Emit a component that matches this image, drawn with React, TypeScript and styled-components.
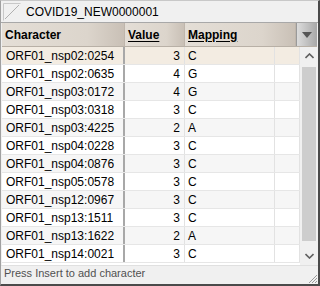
import React from "react";
import styled, { createGlobalStyle } from "styled-components";

const GlobalStyle = createGlobalStyle`
  body {
    margin: 0;
    font-family: "Liberation Sans", Arial, sans-serif;
    font-size: 12px;
    color: #000;
    background: #f0f0f0;
  }
`;

interface Row {
  name: string;
  value: number;
  mapping: string;
}

const rows: Row[] = [
  { name: "ORF01_nsp02:0254", value: 3, mapping: "C" },
  { name: "ORF01_nsp02:0635", value: 4, mapping: "G" },
  { name: "ORF01_nsp03:0172", value: 4, mapping: "G" },
  { name: "ORF01_nsp03:0318", value: 3, mapping: "C" },
  { name: "ORF01_nsp03:4225", value: 2, mapping: "A" },
  { name: "ORF01_nsp04:0228", value: 3, mapping: "C" },
  { name: "ORF01_nsp04:0876", value: 3, mapping: "C" },
  { name: "ORF01_nsp05:0578", value: 3, mapping: "C" },
  { name: "ORF01_nsp12:0967", value: 3, mapping: "C" },
  { name: "ORF01_nsp13:1511", value: 3, mapping: "C" },
  { name: "ORF01_nsp13:1622", value: 2, mapping: "A" },
  { name: "ORF01_nsp14:0021", value: 3, mapping: "C" },
];

const App = () => {
  return (
    <>
      <GlobalStyle />
      <Frame>
        <TabBar>
          <TabIcon width="18" height="18" viewBox="0 0 18 18">
            <path d="M0.5 17.5 L0.5 0.5 L17.5 0.5" fill="none" stroke="#c8c8c8" />
            <path d="M2 16 L16 2" stroke="#b0b0b0" strokeWidth="1" />
          </TabIcon>
          <TabLabel>COVID19_NEW0000001</TabLabel>
        </TabBar>
        <HeaderRow>
          <HeaderCell>Character</HeaderCell>
          <HeaderCell underline>Value</HeaderCell>
          <HeaderCell underline>Mapping</HeaderCell>
          <DropButton>
            <svg width="10" height="6" viewBox="0 0 10 6">
              <path d="M0 0 L10 0 L5 6 Z" fill="#555" />
            </svg>
          </DropButton>
        </HeaderRow>
        <Body>
          <Rows>
            {rows.map((row, idx) => (
              <DataRow key={row.name} selected={idx === 0} alt={idx % 2 === 0}>
                <NameCell>{row.name}</NameCell>
                <ValueCell>{row.value}</ValueCell>
                <MapCell>{row.mapping}</MapCell>
                <MapCell />
              </DataRow>
            ))}
          </Rows>
          <ScrollBar>
            <Arrow>
              <svg width="9" height="6" viewBox="0 0 9 6">
                <path d="M0.5 5 L4.5 1 L8.5 5" fill="none" stroke="#606060" strokeWidth="1.6" />
              </svg>
            </Arrow>
            <Track>
              <Thumb />
            </Track>
            <Arrow>
              <svg width="9" height="6" viewBox="0 0 9 6">
                <path d="M0.5 1 L4.5 5 L8.5 1" fill="none" stroke="#606060" strokeWidth="1.6" />
              </svg>
            </Arrow>
          </ScrollBar>
        </Body>
        <StatusBar>
          Press Insert to add character
          <Grip width="12" height="12" viewBox="0 0 12 12">
            <path d="M11 3 L3 11 M11 6 L6 11 M11 9 L9 11" stroke="#9a9a9a" strokeWidth="1" />
          </Grip>
        </StatusBar>
      </Frame>
    </>
  );
};

export default App;

const Frame = styled.div`
  box-sizing: border-box;
  width: 320px;
  height: 286px;
  display: flex;
  flex-direction: column;
  background: #f0f0f0;
  border-left: 1px solid #a0a0a0;
  border-top: 1px solid #c8c8c8;
  border-right: 2px solid #4a4a4a;
  border-bottom: 2px solid #4a4a4a;
`;

const TabBar = styled.div`
  height: 21px;
  display: flex;
  align-items: center;
  gap: 5px;
  padding-left: 2px;
  border-bottom: 1px solid #a8a8a8;
`;

const TabIcon = styled.svg`
  flex: none;
`;

const TabLabel = styled.span`
  font-size: 12px;
  color: #000;
`;

const HeaderRow = styled.div`
  display: grid;
  grid-template-columns: 123px 60px 111px 1fr;
  height: 23px;
  margin-left: 1px;
  margin-right: 1px;
  border-bottom: 1px solid #b8b0a6;
`;

const HeaderCell = styled.div<{ underline?: boolean }>`
  display: flex;
  align-items: center;
  padding-left: 3px;
  font-weight: bold;
  background: linear-gradient(to right, #e4ded6 0%, #dcd5cc 70%, #c9c0b6 100%);
  border-right: 1px solid #bfb6ac;
  text-decoration: ${(p) => (p.underline ? "underline" : "none")};
  text-underline-offset: 2px;
`;

const DropButton = styled.div`
  display: flex;
  align-items: center;
  justify-content: center;
  background: linear-gradient(to right, #dcdcdc, #a8a8a8);
  border-left: 1px solid #9a9a9a;
`;

const Body = styled.div`
  display: flex;
  height: 218px;
  margin-left: 1px;
`;

const Rows = styled.div`
  flex: 1;
  display: flex;
  flex-direction: column;
  background: #fff;
`;

const DataRow = styled.div<{ selected?: boolean; alt?: boolean }>`
  display: grid;
  grid-template-columns: 123px 60px 90px 1fr;
  height: 18px;
  box-sizing: border-box;
  border-bottom: 1px solid #e6e6e6;
  background: ${(p) => (p.selected ? "#f3ece2" : p.alt ? "#f6f6f6" : "#fff")};
`;

const NameCell = styled.div`
  display: flex;
  align-items: center;
  padding-left: 4px;
  border-right: 2px solid #a8a8a8;
`;

const ValueCell = styled.div`
  display: flex;
  align-items: center;
  justify-content: flex-end;
  padding-right: 4px;
  border-right: 1px solid #e2e2e2;
`;

const MapCell = styled.div`
  display: flex;
  align-items: center;
  padding-left: 3px;
  border-right: 1px solid #e2e2e2;
`;

const ScrollBar = styled.div`
  width: 18px;
  display: flex;
  flex-direction: column;
  background: #f0f0f0;
`;

const Arrow = styled.div`
  height: 18px;
  display: flex;
  align-items: center;
  justify-content: center;
`;

const Track = styled.div`
  flex: 1;
  display: flex;
  flex-direction: column;
  padding: 2px 2px 0 2px;
`;

const Thumb = styled.div`
  height: 174px;
  background: #cdcdcd;
`;

const StatusBar = styled.div`
  flex: 1;
  display: flex;
  align-items: flex-start;
  justify-content: space-between;
  padding: 1px 0 0 3px;
  font-size: 11px;
  color: #505050;
  border-top: 1px solid #e0e0e0;
`;

const Grip = styled.svg`
  align-self: flex-end;
`;
